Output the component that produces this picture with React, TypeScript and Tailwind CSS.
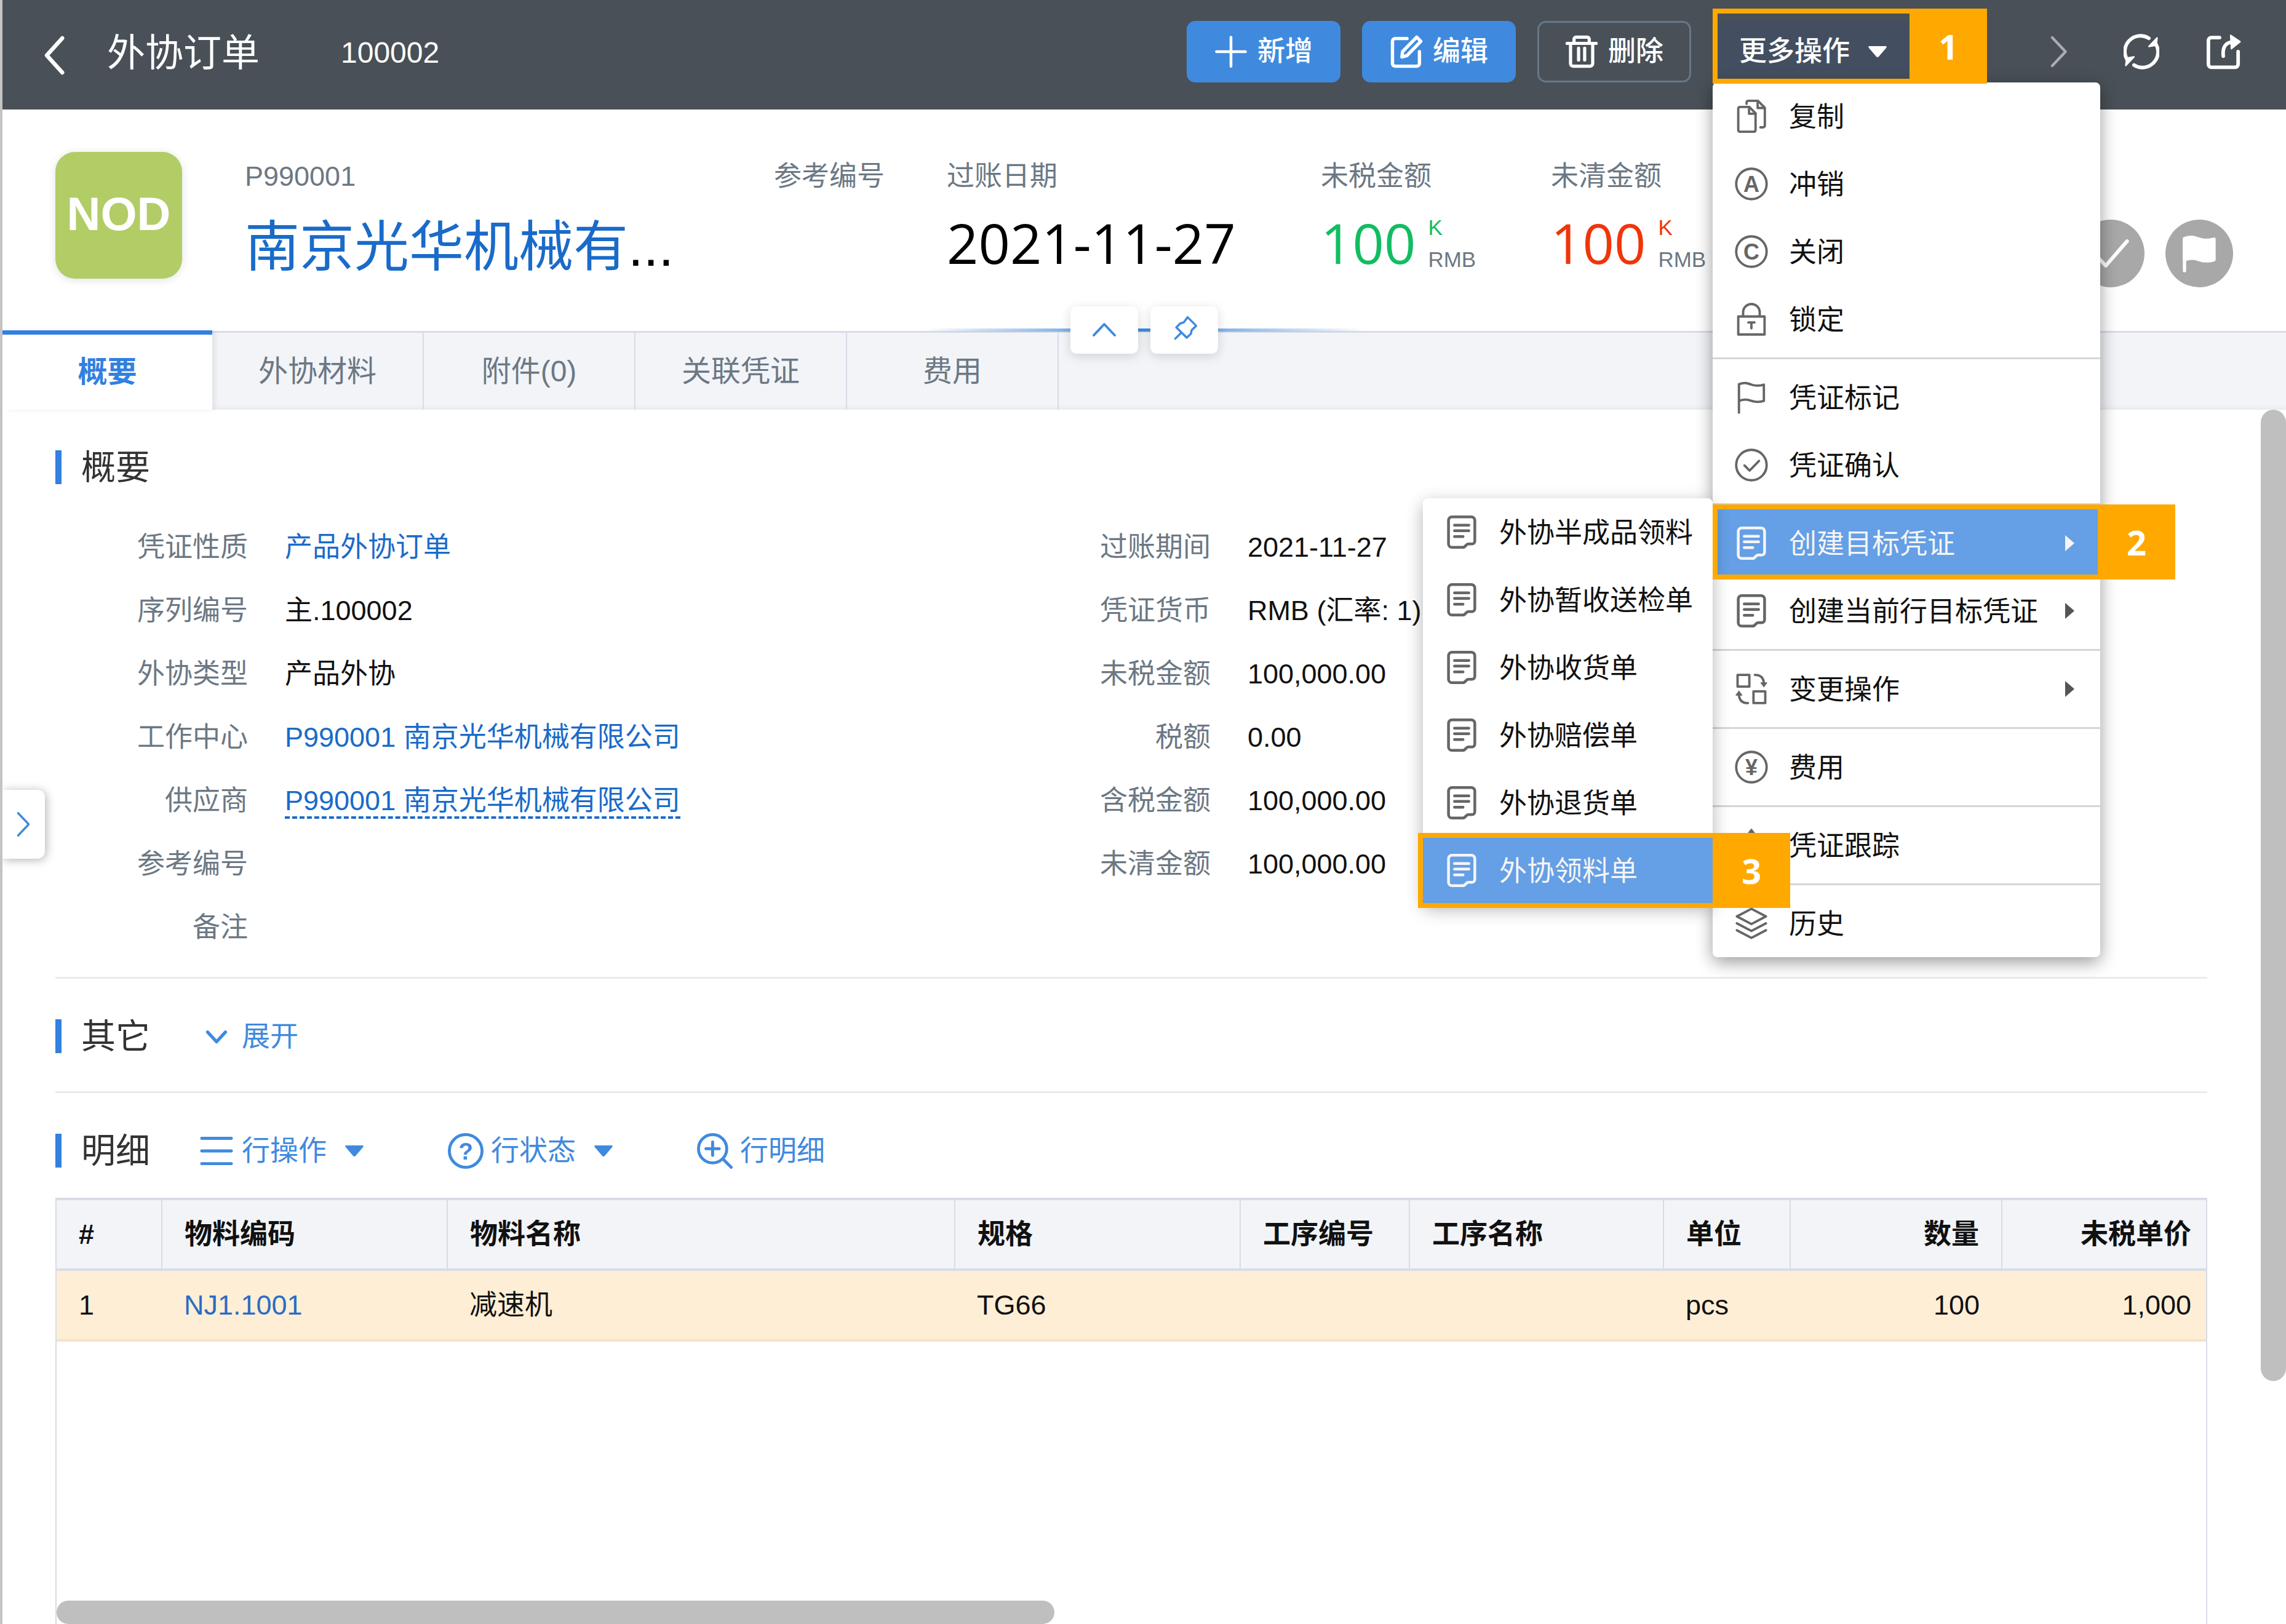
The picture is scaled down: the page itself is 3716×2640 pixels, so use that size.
import React from 'react';
import clsx from 'clsx';

type IconProps = { className?: string };

const Svg = ({ className, width = 2, children }: IconProps & { width?: number; children: React.ReactNode }) => (
    <svg
        viewBox="0 0 24 24"
        className={clsx('shrink-0', className)}
        fill="none"
        stroke="currentColor"
        strokeWidth={width}
        strokeLinecap="round"
        strokeLinejoin="round"
        aria-hidden="true"
    >
        {children}
    </svg>
);

const Letter = ({ children, size = 16 }: { children: string; size?: number }) => (
    <text
        x="12"
        y={12 + size * 0.36}
        textAnchor="middle"
        fontSize={size}
        fontWeight="700"
        fontFamily="Liberation Sans, sans-serif"
        fill="currentColor"
        stroke="none"
    >
        {children}
    </text>
);

const ChevronLeft = (p: IconProps) => <Svg {...p} width={2.4}><path d="M17 1.5 7.5 12 17 22.5" /></Svg>;
const ChevronRight = (p: IconProps) => <Svg {...p} width={1.8}><path d="M7 2.5 16 12 7 21.5" /></Svg>;
const ChevronUp = (p: IconProps) => <Svg {...p}><path d="m3.5 16 8.500-9 8.500 9" /></Svg>;
const ChevronDown = (p: IconProps) => <Svg {...p} width={2.2}><path d="m6 9 6 6.500L18 9" /></Svg>;
const Plus = (p: IconProps) => <Svg {...p}><path d="M12 1.5v21M1.5 12h21" /></Svg>;

const Edit = (p: IconProps) => (
    <Svg {...p} width={2.4}>
        <path d="M12.5 2.500H4a2 2 0 0 0-2 2v16a2 2 0 0 0 2 2h15.500a2 2 0 0 0 2-2V12" />
        <path d="M19.500 1.500 22.500 4.500 12.500 14.800 8.800 15.800 9.300 12z" />
    </Svg>
);

const Trash = (p: IconProps) => (
    <Svg {...p} width={2.3}>
        <path d="M1.500 6h21M6.500 5.500V3a1.500 1.500 0 0 1 1.500-1.500h8A1.500 1.500 0 0 1 17.500 3v2.500" />
        <path d="M4 7v13.500a2 2 0 0 0 2 2h12a2 2 0 0 0 2-2V7M9.800 9.500v8.500M14.200 9.500v8.500" />
    </Svg>
);

const Refresh = (p: IconProps) => (
    <Svg {...p} width={2.4}>
        <path d="M2.500 17.500A10.500 10.500 0 0 1 17 3M21.500 6.500A10.500 10.500 0 0 1 7 21" />
        <path d="m17 8.500 5-.8.500-5zM7 15.500l-5 .8-.5 5z" fill="currentColor" strokeWidth={1} />
    </Svg>
);

const Share = (p: IconProps) => (
    <Svg {...p} width={2.4}>
        <path d="M9.500 2.500H4a2 2 0 0 0-2 2v16a2 2 0 0 0 2 2h16a2 2 0 0 0 2-2V12" />
        <path d="M12 15C11.500 9.500 13 6 18 5.500" />
        <path d="M17 1 23.300 5.300 17.500 10z" fill="currentColor" strokeWidth={1} />
    </Svg>
);

const Copy = (p: IconProps) => (
    <Svg {...p} width={1.7}>
        <path d="M2.500 6.500a1.200 1.200 0 0 1 1.200-1.200h6.800l4.500 4.500V22a1.200 1.200 0 0 1-1.200 1.200H3.700A1.200 1.200 0 0 1 2.500 22z" />
        <path d="M10.300 5.500v4.700h4.700M8.500 3V2A1.200 1.200 0 0 1 9.700.8h7l5 5v13a1.200 1.200 0 0 1-1.200 1.200h-2M16.500 1v5h5" />
    </Svg>
);

const CircleA = (p: IconProps) => <Svg {...p} width={1.7}><circle cx="12" cy="12" r="11" /><Letter>A</Letter></Svg>;
const CircleC = (p: IconProps) => <Svg {...p} width={1.7}><circle cx="12" cy="12" r="11" /><Letter>C</Letter></Svg>;
const CircleYen = (p: IconProps) => <Svg {...p} width={1.7}><circle cx="12" cy="12" r="11" /><Letter>¥</Letter></Svg>;

const Lock = (p: IconProps) => (
    <Svg {...p} width={1.7}>
        <path d="M2.500 10h19v13h-19zM6 10V7a6 6 0 0 1 12 0v3M9.800 14.300h4.400M12 14.300v4.200" />
    </Svg>
);

const Flag = (p: IconProps) => (
    <Svg {...p} width={1.7}>
        <path d="M3 23V2.500M3 2.500c4-1.500 6-.8 9 .3s5.500 1 9 0v11.700c-3.500 1.200-6 1-9 0s-5-1.300-9 0" />
    </Svg>
);

const CircleCheck = (p: IconProps) => (
    <Svg {...p} width={1.7}><circle cx="12" cy="12" r="11" /><path d="m7 12.300 3.700 3.700 6.800-7" /></Svg>
);

const Doc = (p: IconProps) => (
    <Svg {...p} width={2}>
        <path d="M5 1h14a2.500 2.500 0 0 1 2.500 2.500V18.500a2 2 0 0 1-2 2h-2.700c-1.800 0-1.800 2.500-4 2.500H5A2.500 2.500 0 0 1 2.500 20.500v-17A2.500 2.500 0 0 1 5 1z" />
        <path d="M6.800 7h10.400M6.800 11h10.400M6.800 15.200h6.200" />
    </Svg>
);

const Swap = (p: IconProps) => (
    <Svg {...p} width={1.7}>
        <path d="M2 1.800h8.500v8.500H2zM13.500 13.700H22v8.500h-8.500z" />
        <path d="M14.500 1.800c4 0 6.500 2 6.500 6.700M9.500 22.200c-4 0-6.500-2-6.500-6.700" />
        <path d="M18.800 7.500h4.400L21 10.500zM.8 16.500h4.400L3 13.500z" fill="currentColor" strokeWidth={0.5} />
    </Svg>
);

const Track = (p: IconProps) => (
    <Svg {...p} width={1.6}><path d="M12 1v22M12 1 9 5M12 1l3 4M3 12h18" /></Svg>
);

const Layers = (p: IconProps) => (
    <Svg {...p} width={1.7}>
        <path d="M12 1.500 22.500 7 12 12.500 1.500 7zM1.500 12 12 17.500 22.500 12M1.500 17 12 22.500 22.500 17" />
    </Svg>
);

const Lines = (p: IconProps) => <Svg {...p}><path d="M2 3.500h20M2 12h20M2 20.500h20" /></Svg>;
const Question = (p: IconProps) => <Svg {...p}><circle cx="12" cy="12" r="11" /><Letter>?</Letter></Svg>;

const ZoomIn = (p: IconProps) => (
    <Svg {...p}><circle cx="10.500" cy="10.500" r="9.500" /><path d="m17.500 17.500 5.500 5.500M10.500 6v9M6 10.500h9" /></Svg>
);

const Pin = (p: IconProps) => (
    <Svg {...p}>
        <path d="m14 1.500 8 8-4.200 4-.8 3.500-3.800 3.500L3.500 11l3.700-3.700L10.500 6.300zM8 16l-5.500 5.500" />
    </Svg>
);

const Caret = ({ className }: IconProps) => (
    <svg viewBox="0 0 30 18" className={clsx('h-[18px] w-[30px] shrink-0', className)} fill="currentColor" aria-hidden="true">
        <path d="M2 0h26q3 0 1 3L17 17q-2 2-4 0L1 3Q-1 0 2 0z" />
    </svg>
);

// Numbered guide marker drawn over a control
const Marker = ({ n, className }: { n: number; className: string }) => (
    <span className={clsx('pointer-events-none absolute z-20 border-8 border-r-0 border-[#ffa900]', className)}>
        <span className="absolute -top-2 -bottom-2 left-full flex w-[126px] items-center justify-center bg-[#ffa900] font-['Open_Sans','Noto_Sans',sans-serif] text-[56px] font-bold text-white">
            {n}
        </span>
    </span>
);

type Item = { label: string; icon: React.FC<IconProps>; arrow?: boolean; active?: boolean };

const menuGroups: Item[][] = [
    [
        { label: '复制', icon: Copy },
        { label: '冲销', icon: CircleA },
        { label: '关闭', icon: CircleC },
        { label: '锁定', icon: Lock },
    ],
    [
        { label: '凭证标记', icon: Flag },
        { label: '凭证确认', icon: CircleCheck },
    ],
    [
        { label: '创建目标凭证', icon: Doc, arrow: true, active: true },
        { label: '创建当前行目标凭证', icon: Doc, arrow: true },
    ],
    [{ label: '变更操作', icon: Swap, arrow: true }],
    [{ label: '费用', icon: CircleYen }],
    [{ label: '凭证跟踪', icon: Track }],
    [{ label: '历史', icon: Layers }],
];

const subMenu = ['外协半成品领料', '外协暂收送检单', '外协收货单', '外协赔偿单', '外协退货单', '外协领料单'];

const MenuRow = ({ item, children }: { item: Item; children?: React.ReactNode }) => {
    const Icon = item.icon;
    return (
        <li className="relative">
            <button
                type="button"
                className={clsx(
                    'flex h-[110px] w-full items-center gap-[34px] pr-[42px] pl-9 text-left text-[45px] whitespace-nowrap',
                    item.active ? 'bg-[#659fe5] text-[#f5f5f5]' : 'text-[#111]',
                )}
            >
                <Icon className={clsx('size-[54px]', item.active ? 'text-[#f5f5f5]' : 'text-[#666]')} />
                <span className="pt-1">{item.label}</span>
                {item.arrow && (
                    <svg viewBox="0 0 15 28" className={clsx('ml-auto h-7 w-[15px]', !item.active && 'text-[#555]')} fill="currentColor" aria-hidden="true">
                        <path d="M0 1 15 14 0 27z" />
                    </svg>
                )}
            </button>
            {children}
        </li>
    );
};

const MoreMenu = () => (
    <ul className="absolute top-full left-0 z-10 w-[630px] rounded-lg bg-white shadow-[0_8px_28px_rgba(0,0,0,0.4)]">
        {menuGroups.map((group, g) => (
            <React.Fragment key={g}>
                {g > 0 && <li role="separator" className="my-[7px] h-[3px] bg-[#d5d5d5]" />}
                {group.map((item) => (
                    <MenuRow key={item.label} item={item}>
                        {item.active && (
                            <>
                                <ul className="absolute -top-[18px] right-full z-10 w-[471px] rounded-lg bg-white shadow-[0_8px_28px_rgba(0,0,0,0.3)]">
                                    {subMenu.map((label, i) => {
                                        const last = i === subMenu.length - 1;
                                        return (
                                            <MenuRow key={label} item={{ label, icon: Doc, active: last }}>
                                                {last && <Marker n={3} className="-top-1.5 right-0 -bottom-1.5 -left-2" />}
                                            </MenuRow>
                                        );
                                    })}
                                </ul>
                                <Marker n={2} className="-top-2 right-1 -bottom-1 left-0" />
                            </>
                        )}
                    </MenuRow>
                ))}
            </React.Fragment>
        ))}
    </ul>
);

const ActionButton = ({ icon: Icon, label, outline }: { icon: React.FC<IconProps>; label: string; outline?: boolean }) => (
    <button
        type="button"
        className={clsx(
            'flex h-[100px] w-[250px] items-center justify-center gap-4 rounded-[14px] text-[45px] font-medium',
            outline ? 'border-[3px] border-[#65788b]' : 'bg-[#3f8ade]',
        )}
    >
        <Icon className="size-[54px]" />
        {label}
    </button>
);

const TopBar = () => (
    <header className="flex h-[178px] items-center bg-[#495057] pr-[73px] pb-2.5 pl-[52px] text-white">
        <button type="button" aria-label="返回"><ChevronLeft className="mt-3 size-[64px]" /></button>
        <h1 className="ml-[54px] pt-1 text-[62px]">外协订单</h1>
        <span className="ml-[132px] pt-1 text-[48px] font-medium">100002</span>
        <div className="ml-auto flex gap-[35px]">
            <ActionButton icon={Plus} label="新增" />
            <ActionButton icon={Edit} label="编辑" />
            <ActionButton icon={Trash} label="删除" outline />
            <div className="relative">
                <button type="button" aria-expanded="true" className="flex h-[100px] w-[320px] items-center gap-[30px] bg-[#434f60] pl-[43px] text-[45px] font-medium">
                    更多操作
                    <Caret />
                </button>
                <MoreMenu />
                <Marker n={1} className="-top-5 right-0 -bottom-0.5 left-0" />
            </div>
        </div>
        <div className="ml-[215px] flex gap-[75px]">
            <button type="button" aria-label="下一张" className="text-[#a9adb1]"><ChevronRight className="size-[58px]" /></button>
            <button type="button" aria-label="刷新"><Refresh className="size-[58px]" /></button>
            <button type="button" aria-label="新窗口打开"><Share className="size-[58px]" /></button>
        </div>
    </header>
);

const Fact = ({ label, className, children }: { label: string; className: string; children?: React.ReactNode }) => (
    <div className={className}>
        <div className="text-[45px] leading-[80px] text-[#6c7884]">{label}</div>
        <div className="flex h-[134px] items-center font-['Open_Sans','Noto_Sans',sans-serif] text-[90px] whitespace-nowrap text-black">{children}</div>
    </div>
);

const Amount = ({ value, color }: { value: string; color: string }) => (
    <>
        <span className={color}>{value}</span>
        <span className="ml-5 flex flex-col pt-1 font-['Liberation_Sans',sans-serif] text-[35px] leading-[52px]">
            <span className={color}>K</span>
            <span className="text-[#6c7884]">RMB</span>
        </span>
    </>
);

const Summary = () => (
    <section className="relative flex h-[360px] items-start pt-[69px] pr-[86px] pl-[86px]">
        <div className="flex size-[206px] shrink-0 items-center justify-center rounded-[32px] bg-[#b2cc66] pb-1 text-[76px] font-bold text-white shadow-[0_2px_14px_rgba(0,0,0,0.12)]">
            NOD
        </div>
        <div className="ml-[102px] w-[860px]">
            <div className="text-[45px] leading-[80px] text-[#6c7884]">P990001</div>
            <div className="text-[89px] leading-[148px] text-black">
                <a href="#company" className="text-[#1a6bc9]">南京光华机械有</a>...
            </div>
        </div>
        <Fact label="参考编号" className="w-[281px]" />
        <Fact label="过账日期" className="w-[608px]">2021-11-27</Fact>
        <Fact label="未税金额" className="w-[374px]"><Amount value="100" color="text-[#12bd62]" /></Fact>
        <Fact label="未清金额" className="w-[374px]"><Amount value="100" color="text-[#f0350a]" /></Fact>
        <div className="mt-[110px] ml-auto flex gap-[34px] text-white">
            <span className="flex size-[110px] items-center justify-center rounded-full bg-[#a8a8a8]">
                <Svg className="size-[64px]" width={2.2}><path d="m2 12 7 7.500L22 4.500" /></Svg>
            </span>
            <span className="flex size-[110px] items-center justify-center rounded-full bg-[#a8a8a8]">
                <Svg className="size-[64px]" width={2}>
                    <path d="M3 22.500V3" />
                    <path d="M3 3c4-1.500 6-.8 9 .3s5.500 1 9 0v12.500c-3.500 1.200-6 1-9 0s-5-1.300-9 0z" fill="currentColor" />
                </Svg>
            </span>
        </div>
        <div className="absolute inset-x-0 -bottom-[37px] z-10 flex justify-center">
            <div className="absolute top-9 h-[5px] w-[720px] bg-linear-to-r from-transparent via-[#3f8ade] to-transparent" />
            <div className="relative flex gap-5 text-[#3f8ade]">
                <button type="button" aria-label="收起" className="flex h-[77px] w-[110px] items-center justify-center rounded-[10px] bg-white shadow-[0_4px_18px_rgba(0,0,0,0.15)]">
                    <ChevronUp className="size-[48px]" />
                </button>
                <button type="button" aria-label="固定" className="flex h-[77px] w-[110px] items-center justify-center rounded-[10px] bg-white pb-1.5 pl-1 shadow-[0_4px_18px_rgba(0,0,0,0.15)]">
                    <Pin className="size-[42px]" />
                </button>
            </div>
        </div>
    </section>
);

const tabs = ['概要', '外协材料', '附件(0)', '关联凭证', '费用'];

const Tabs = () => (
    <nav className="flex h-[128px] border-t-[3px] border-[#d9dce6] bg-[#f2f4f8] shadow-[inset_0_-8px_8px_-6px_rgba(0,0,0,0.06)]">
        {tabs.map((tab, i) => (
            <button
                key={tab}
                type="button"
                className={clsx(
                    'text-[48px]',
                    i === 0
                        ? 'relative -mt-1 w-[341px] border-t-[7px] border-[#3280e0] bg-white font-bold text-[#3280e0] shadow-[5px_0_8px_rgba(0,0,0,0.07)]'
                        : 'w-[344px] border-r-2 border-[#d9dce6] text-[#6c7884]',
                )}
            >
                {tab}
            </button>
        ))}
    </nav>
);

const SectionHead = ({ title, children }: { title: string; children?: React.ReactNode }) => (
    <div className="flex h-[55px] items-center">
        <span className="h-full w-2.5 bg-[#3280e0]" />
        <h2 className="mr-[79px] ml-8 text-[56px] text-[#333]">{title}</h2>
        <div className="flex gap-[137px]">{children}</div>
    </div>
);

const Tool = ({ icon: Icon, label, caret }: { icon: React.FC<IconProps>; label: string; caret?: boolean }) => (
    <button type="button" className="flex items-center text-[46px] text-[#3f8ade]">
        <Icon className="mr-3 size-[58px]" />
        {label}
        {caret && <Caret className="ml-[30px]" />}
    </button>
);

type Field = [label: string, value?: string, kind?: 'link' | 'dashed'];

const leftFields: Field[] = [
    ['凭证性质', '产品外协订单', 'link'],
    ['序列编号', '主.100002'],
    ['外协类型', '产品外协'],
    ['工作中心', 'P990001 南京光华机械有限公司', 'link'],
    ['供应商', 'P990001 南京光华机械有限公司', 'dashed'],
    ['参考编号'],
    ['备注'],
];

const rightFields: Field[] = [
    ['过账期间', '2021-11-27'],
    ['凭证货币', 'RMB (汇率: 1)'],
    ['未税金额', '100,000.00'],
    ['税额', '0.00'],
    ['含税金额', '100,000.00'],
    ['未清金额', '100,000.00'],
];

const Fields = ({ fields }: { fields: Field[] }) => (
    <dl>
        {fields.map(([label, value, kind]) => (
            <div key={label} className="flex h-[103px] items-center gap-[60px] pt-1 text-[45px] whitespace-nowrap">
                <dt className="w-[313px] text-right text-[#6c7884]">{label}</dt>
                <dd className="text-[#111]">
                    {kind ? (
                        <a
                            href="#detail"
                            className={clsx('text-[#1a6bc9]', kind === 'dashed' && 'border-b-4 border-dashed border-[#1a6bc9]')}
                        >
                            {value}
                        </a>
                    ) : value}
                </dd>
            </div>
        ))}
    </dl>
);

const columns = [
    { title: '#', value: '1', width: 'w-[171px]' },
    { title: '物料编码', value: 'NJ1.1001', width: 'w-[464px]', link: true },
    { title: '物料名称', value: '减速机', width: 'w-[825px]' },
    { title: '规格', value: 'TG66', width: 'w-[464px]' },
    { title: '工序编号', value: '', width: 'w-[275px]' },
    { title: '工序名称', value: '', width: 'w-[413px]' },
    { title: '单位', value: 'pcs', width: 'w-[206px]' },
    { title: '数量', value: '100', width: 'w-[344px]', right: true },
    { title: '未税单价', value: '1,000', width: '', right: true },
];

const DetailTable = () => (
    <div className="flex flex-1 flex-col border-x-2 border-[#d9dce6]">
        <table className="w-full table-fixed text-[45px] text-[#111]">
            <thead>
                <tr className="h-[115px] border-y-4 border-[#d9dce6] bg-[#f2f4f8]">
                    {columns.map((c) => (
                        <th
                            key={c.title}
                            className={clsx(
                                'border-r-2 border-[#d9dce6] pl-9 font-bold whitespace-nowrap last:border-r-0 last:pr-6',
                                c.right ? 'pr-9 text-right' : 'text-left',
                                c.width,
                            )}
                        >
                            {c.title}
                        </th>
                    ))}
                </tr>
            </thead>
            <tbody>
                <tr className="h-[115px] border-b-4 border-[#f5e3c9] bg-[#feeed6]">
                    {columns.map((c) => (
                        <td key={c.title} className={clsx('pl-9 last:pr-6', c.right && 'pr-9 text-right')}>
                            {c.link ? <a href="#item" className="text-[#2a6cc4]">{c.value}</a> : c.value}
                        </td>
                    ))}
                </tr>
            </tbody>
        </table>
        <div className="mt-auto h-[38px] w-13/28 rounded-full bg-[#bfbfbf]" />
    </div>
);

const App = () => {
    return (
        <div className="flex h-screen flex-col overflow-hidden border-l-4 border-[#c4c4c4] bg-white font-['Liberation_Sans','Noto_Sans_CJK_SC',sans-serif]">
            <TopBar />
            <Summary />
            <Tabs />
            <div className="relative flex min-h-0 flex-1">
                <button
                    type="button"
                    aria-label="展开侧栏"
                    className="absolute top-[618px] left-0 flex h-[112px] w-[69px] items-center justify-center rounded-r-xl bg-white text-[#3f8ade] shadow-[2px_2px_16px_rgba(0,0,0,0.3)]"
                >
                    <ChevronRight className="size-[46px]" />
                </button>
                <main className="flex flex-1 flex-col pr-[87px] pl-[86px]">
                    <section className="border-b-[3px] border-[#ebebeb] pt-[66px] pb-[31px]">
                        <SectionHead title="概要" />
                        <div className="mt-[49px] grid grid-cols-[17fr_21fr]">
                            <Fields fields={leftFields} />
                            <Fields fields={rightFields} />
                        </div>
                    </section>
                    <section className="border-b-[3px] border-[#ebebeb] pt-[66px] pb-[62px]">
                        <SectionHead title="其它">
                            <Tool icon={ChevronDown} label="展开" />
                        </SectionHead>
                    </section>
                    <section className="flex flex-1 flex-col gap-[49px] pt-[66px]">
                        <SectionHead title="明细">
                            <Tool icon={Lines} label="行操作" caret />
                            <Tool icon={Question} label="行状态" caret />
                            <Tool icon={ZoomIn} label="行明细" />
                        </SectionHead>
                        <DetailTable />
                    </section>
                </main>
                <div className="w-[41px]">
                    <div className="h-4/5 rounded-full bg-[#bfbfbf]" />
                </div>
            </div>
        </div>
    );
}

export default App;
